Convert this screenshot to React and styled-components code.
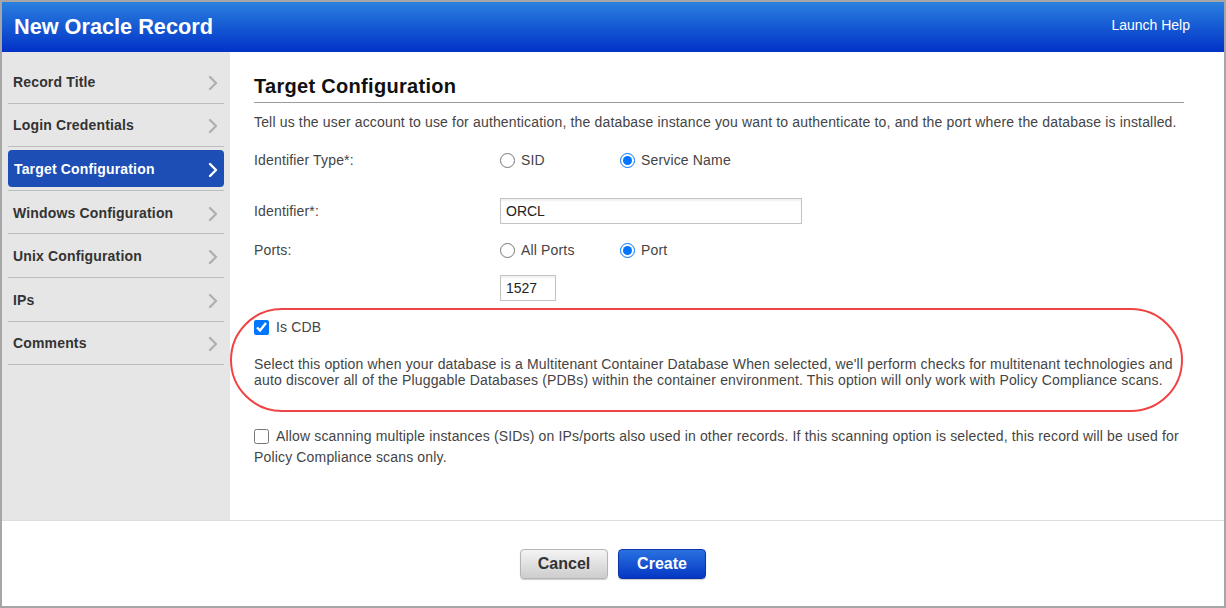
import styled, { createGlobalStyle } from "styled-components";

const GlobalStyle = createGlobalStyle`
  html, body {
    margin: 0;
    padding: 0;
    background: #fff;
  }
  body {
    font-family: "Liberation Sans", Arial, sans-serif;
    color: #444;
    letter-spacing: 0.16px;
  }
  * {
    box-sizing: border-box;
  }
`;

const navItems = [
  "Record Title",
  "Login Credentials",
  "Target Configuration",
  "Windows Configuration",
  "Unix Configuration",
  "IPs",
  "Comments",
];

const Chevron = ({ color }) => (
  <svg width="10" height="16" viewBox="0 0 10 16">
    <polyline
      points="2,2 8,8 2,14"
      fill="none"
      stroke={color}
      strokeWidth="2.4"
      strokeLinecap="round"
      strokeLinejoin="round"
    />
  </svg>
);

const RadioGroup = ({ name, options, value }) => (
  <Options>
    {options.map((opt) => (
      <Option key={opt}>
        <Radio type="radio" name={name} defaultChecked={opt === value} />
        {opt}
      </Option>
    ))}
  </Options>
);

const App = () => {
  return (
    <Frame>
      <GlobalStyle />
      <Header>
        <Title>New Oracle Record</Title>
        <HelpLink>Launch Help</HelpLink>
      </Header>
      <Body>
        <Sidebar>
          {navItems.map((item) => {
            const active = item === "Target Configuration";
            return (
              <NavItem key={item}>
                <NavLabel $active={active}>
                  {item}
                  <Chevron color={active ? "#ffffff" : "#b0b0b0"} />
                </NavLabel>
              </NavItem>
            );
          })}
        </Sidebar>
        <Main>
          <Heading>Target Configuration</Heading>
          <Intro>
            Tell us the user account to use for authentication, the database
            instance you want to authenticate to, and the port where the
            database is installed.
          </Intro>
          <FormRow $top={20} $height={20}>
            <Label>Identifier Type*:</Label>
            <RadioGroup
              name="idtype"
              options={["SID", "Service Name"]}
              value="Service Name"
            />
          </FormRow>
          <FormRow $top={28} $height={26}>
            <Label>Identifier*:</Label>
            <TextInput defaultValue="ORCL" $width={302} />
          </FormRow>
          <FormRow $top={16} $height={20}>
            <Label>Ports:</Label>
            <RadioGroup
              name="ports"
              options={["All Ports", "Port"]}
              value="Port"
            />
          </FormRow>
          <FormRow $top={15} $height={26}>
            <Label />
            <TextInput defaultValue="1527" $width={56} />
          </FormRow>
          <Highlight>
            <CheckRow>
              <Check type="checkbox" defaultChecked />
              Is CDB
            </CheckRow>
            <Note>
              Select this option when your database is a Multitenant Container
              Database When selected, we'll perform checks for multitenant
              technologies and
              <br />
              auto discover all of the Pluggable Databases (PDBs) within the
              container environment. This option will only work with Policy
              Compliance scans.
            </Note>
          </Highlight>
          <AllowText>
            <Check type="checkbox" />
            Allow scanning multiple instances (SIDs) on IPs/ports also used in
            other records. If this scanning option is selected, this record will
            be used for
            <br />
            Policy Compliance scans only.
          </AllowText>
        </Main>
      </Body>
      <Footer>
        <Button>Cancel</Button>
        <Button $primary>Create</Button>
      </Footer>
    </Frame>
  );
};
export default App;

const Frame = styled.div`
  width: 1226px;
  height: 608px;
  border: 2px solid #a6a6a6;
  display: flex;
  flex-direction: column;
  overflow: hidden;
`;

const Header = styled.header`
  height: 50px;
  flex-shrink: 0;
  display: flex;
  align-items: center;
  justify-content: space-between;
  padding: 0 34px 0 12px;
  background: linear-gradient(#2a80df, #0132c7);
`;

const Title = styled.h1`
  margin: 0;
  font-size: 21.7px;
  font-weight: bold;
  letter-spacing: 0;
  color: #fff;
`;

const HelpLink = styled.span`
  font-size: 14px;
  color: #fff;
  margin-bottom: 4px;
  letter-spacing: 0;
`;

const Body = styled.div`
  display: flex;
  height: 468px;
  flex-shrink: 0;
`;

const Sidebar = styled.nav`
  width: 228px;
  flex-shrink: 0;
  background: #e6e6e6;
  padding: 8px 6px 0 6px;
`;

const NavItem = styled.div`
  height: 43.6px;
  border-bottom: 1px solid #bdbdbd;
  display: flex;
  align-items: center;
`;

const NavLabel = styled.div`
  flex: 1;
  height: 37px;
  display: flex;
  align-items: center;
  justify-content: space-between;
  padding: 1px 6px 0 ${(p) => (p.$active ? "6px" : "5px")};
  border-radius: 4px;
  font-size: 14px;
  font-weight: bold;
  color: ${(p) => (p.$active ? "#fff" : "#333")};
  background: ${(p) => (p.$active ? "#1c4eb6" : "transparent")};

  svg {
    margin-top: 2px;
  }
`;

const Main = styled.main`
  flex: 1;
  background: #fff;
  padding: 23px 40px 0 24px;
`;

const Heading = styled.h2`
  margin: 0;
  font-size: 20px;
  font-weight: bold;
  letter-spacing: 0.3px;
  color: #111;
  line-height: 23px;
  padding-bottom: 4px;
  border-bottom: 1px solid #9a9a9a;
`;

const Intro = styled.p`
  margin: 11px 0 0;
  font-size: 14px;
  line-height: 16px;
  color: #444;
  white-space: nowrap;
`;

const FormRow = styled.div`
  display: flex;
  align-items: center;
  margin-top: ${(p) => p.$top}px;
  height: ${(p) => p.$height}px;
`;

const Label = styled.div`
  width: 246px;
  flex-shrink: 0;
  font-size: 14px;
  color: #444;
`;

const Options = styled.div`
  display: flex;
`;

const Option = styled.label`
  width: 120px;
  display: flex;
  align-items: center;
  gap: 6px;
  font-size: 14px;
  color: #444;
`;

const Radio = styled.input`
  width: 15px;
  height: 15px;
  margin: 0;
`;

const TextInput = styled.input`
  width: ${(p) => p.$width}px;
  height: 26px;
  border: 1px solid #c4c4c4;
  box-shadow: inset 0 2px 2px rgba(0, 0, 0, 0.06);
  padding: 0 5px;
  font-family: "Liberation Sans", Arial, sans-serif;
  font-size: 14px;
  color: #222;
  outline: none;
`;

const Highlight = styled.section`
  margin: 7px 0 0 -24px;
  width: 953px;
  border: 2px solid #ee4444;
  border-radius: 52px;
  padding: 7px 0 22px 22px;
`;

const CheckRow = styled.label`
  display: flex;
  align-items: center;
  gap: 7px;
  height: 20px;
  font-size: 14px;
  color: #444;
`;

const Check = styled.input`
  width: 15px;
  height: 15px;
  margin: 0;
  vertical-align: -3px;
`;

const Note = styled.p`
  margin: 19px 0 0;
  font-size: 14px;
  line-height: 16px;
  color: #444;
  white-space: nowrap;
`;

const AllowText = styled.label`
  display: block;
  margin-top: 14px;
  font-size: 14px;
  line-height: 21px;
  color: #444;
  white-space: nowrap;

  input {
    margin-right: 7px;
  }
`;

const Footer = styled.footer`
  flex: 1;
  border-top: 1px solid #dedede;
  display: flex;
  justify-content: center;
  align-items: center;
  gap: 10px;
`;

const Button = styled.button`
  height: 30px;
  min-width: 88px;
  padding: 0 14px;
  border-radius: 4px;
  font-family: "Liberation Sans", Arial, sans-serif;
  font-size: 16px;
  font-weight: bold;
  cursor: pointer;
  color: ${(p) => (p.$primary ? "#fff" : "#333")};
  border: 1px solid ${(p) => (p.$primary ? "#0a34a8" : "#b4b4b4")};
  background: ${(p) =>
    p.$primary
      ? "linear-gradient(#2a72e0, #0537c4)"
      : "linear-gradient(#f4f4f4, #cdcdcd)"};
  box-shadow: 0 1px 1px rgba(0, 0, 0, 0.2);
`;
